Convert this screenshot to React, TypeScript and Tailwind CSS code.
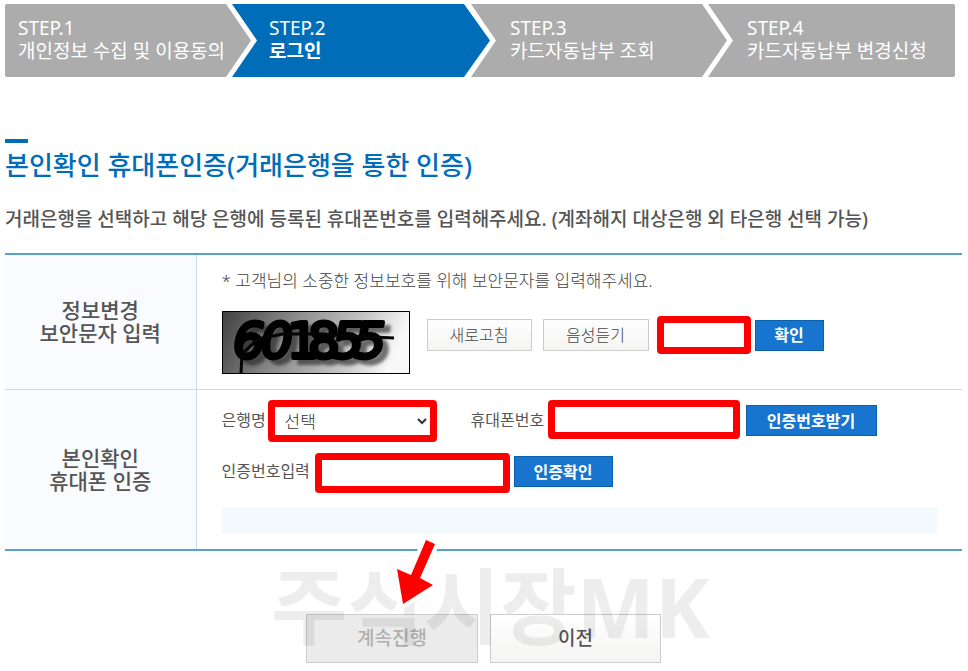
import React, { useState } from "react";

const STEPS = [
  {
    name: "STEP.1",
    title: "개인정보 수집 및 이용동의",
    className:
      "flex-[233] pl-[13px] [clip-path:polygon(0_0,calc(100%-25px)_0,100%_50%,calc(100%-25px)_100%,0_100%)]",
  },
  {
    name: "STEP.2",
    title: "로그인",
    className:
      "flex-[221] -ml-[19px] pl-[37px] [clip-path:polygon(0_0,calc(100%-26px)_0,100%_50%,calc(100%-26px)_100%,0_100%,25px_50%)]",
  },
  {
    name: "STEP.3",
    title: "카드자동납부 조회",
    className:
      "flex-[217] -ml-[19px] pl-[39px] [clip-path:polygon(0_0,calc(100%-25px)_0,100%_50%,calc(100%-25px)_100%,0_100%,25px_50%)]",
  },
  {
    name: "STEP.4",
    title: "카드자동납부 변경신청",
    className:
      "flex-[208] -ml-[19px] pl-[39px] [clip-path:polygon(0_0,100%_0,100%_100%,0_100%,25px_50%)]",
  },
];

const CURRENT_STEP = 1;

const lightButton =
  "h-8 border border-[#cccccc] bg-linear-to-b from-white to-[#f4f4f3] text-base font-light text-[#444444]";
const blueButton =
  "h-[31px] border border-[#0a62ab] bg-[#1774cf] text-base font-bold text-white";
const redField =
  "rounded-[4px] border-[7px] border-[#ff0000] bg-white text-[17px] font-light text-[#333333] outline-none";
const fieldLabel = "whitespace-nowrap";
const rowHeader =
  "w-[191px] border-r border-[#c3dcef] bg-[#f9fbfe] text-center align-middle text-[21px] leading-[23px] font-medium";

function StepBar() {
  return (
    <ol className="mr-[7px] flex overflow-hidden rounded-[2px]">
      {STEPS.map((step, index) => (
        <li
          key={step.name}
          aria-current={index === CURRENT_STEP ? "step" : undefined}
          className={`h-[73px] min-w-0 pt-[13px] text-[19px] leading-[23px] whitespace-nowrap text-white ${
            index === CURRENT_STEP ? "bg-[#006db9]" : "bg-[#acacac]"
          } ${step.className}`}
        >
          <p>{step.name}</p>
          <p className={index === CURRENT_STEP ? "font-bold" : ""}>
            {step.title}
          </p>
        </li>
      ))}
    </ol>
  );
}

function Captcha() {
  return (
    <svg
      width="188"
      height="63"
      viewBox="0 0 188 63"
      role="img"
      aria-label="보안문자"
      className="shrink-0"
    >
      <defs>
        <linearGradient id="captcha-bg" x1="0" y1="0" x2="1" y2="0.15">
          <stop offset="0" stopColor="#414141" />
          <stop offset="0.4" stopColor="#8c8c8c" />
          <stop offset="0.75" stopColor="#c4c4c4" />
          <stop offset="1" stopColor="#f8f8f8" />
        </linearGradient>
        <filter id="captcha-shadow">
          <feDropShadow
            dx="6"
            dy="5"
            stdDeviation="1.5"
            floodColor="#222222"
            floodOpacity="0.6"
          />
        </filter>
      </defs>
      <rect
        x="0.5"
        y="0.5"
        width="187"
        height="62"
        fill="url(#captcha-bg)"
        stroke="#000000"
      />
      <text
        y="47"
        fontFamily="'DejaVu Sans', sans-serif"
        fontSize="50"
        fill="#050505"
        stroke="#050505"
        strokeWidth="4"
        strokeLinejoin="round"
        filter="url(#captcha-shadow)"
      >
        <tspan x="11 39" fontStyle="italic">
          60
        </tspan>
        <tspan x="65 86">18</tspan>
        <tspan x="110 132" fontStyle="italic">
          55
        </tspan>
      </text>
      <path
        d="M19 62 L20 43 L36 28 L61 23 L101 23 L130 25 L172 27"
        fill="none"
        stroke="#050505"
        strokeWidth="3"
      />
    </svg>
  );
}

function PointerArrow() {
  return (
    <svg
      width="48"
      height="75"
      viewBox="0 0 48 75"
      aria-hidden="true"
      className="pointer-events-none absolute -top-[79px] left-[86px] z-20"
    >
      <path
        d="M34 5 L43 9 L28 43 L41 50 L11 69 L5 34 L19 40 Z"
        fill="#ff0000"
        stroke="#ffffff"
        strokeWidth="8"
        strokeLinejoin="round"
        paintOrder="stroke"
      />
    </svg>
  );
}

export default function App() {
  const [captcha, setCaptcha] = useState("");
  const [bank, setBank] = useState("");
  const [phone, setPhone] = useState("");
  const [code, setCode] = useState("");

  return (
    <main className="overflow-hidden bg-white pt-1 pr-[6px] pb-2 pl-[5px] font-['Noto_Sans','Noto_Sans_CJK_KR',sans-serif] text-[#555555]">
      <StepBar />

      <div className="mt-[62px] h-1 w-[23px] bg-[#006db9]" />
      <h1 className="mt-[6px] text-[26px] leading-8 font-medium text-[#006db9]">
        본인확인 휴대폰인증(거래은행을 통한 인증)
      </h1>
      <p className="mt-[26px] text-[19px] leading-6 font-medium">
        거래은행을 선택하고 해당 은행에 등록된 휴대폰번호를 입력해주세요.
        (계좌해지 대상은행 외 타은행 선택 가능)
      </p>

      <form onSubmit={(e) => e.preventDefault()}>
        <table className="mt-[22px] w-full border-t-2 border-b-2 border-[#5a9fd0]">
          <tbody>
            <tr className="border-b border-[#c3dcef]">
              <th scope="row" className={rowHeader}>
                정보변경
                <br />
                보안문자 입력
              </th>
              <td className="px-[25px] pt-4 pb-[15px]">
                <p className="text-[17px] leading-5 font-light text-[#444444]">
                  * 고객님의 소중한 정보보호를 위해 보안문자를 입력해주세요.
                </p>
                <div className="mt-5 flex">
                  <Captcha />
                  <div className="ml-[17px] flex h-12 items-center">
                    <button type="button" className={`w-[105px] ${lightButton}`}>
                      새로고침
                    </button>
                    <button
                      type="button"
                      className={`ml-[11px] w-[106px] ${lightButton}`}
                    >
                      음성듣기
                    </button>
                    <input
                      type="text"
                      aria-label="보안문자 입력"
                      value={captcha}
                      onChange={(e) => setCaptcha(e.target.value)}
                      className={`ml-2 h-[38px] w-[94px] ${redField}`}
                    />
                    <button
                      type="button"
                      className={`ml-1 w-[69px] ${blueButton}`}
                    >
                      확인
                    </button>
                  </div>
                </div>
              </td>
            </tr>

            <tr>
              <th scope="row" className={rowHeader}>
                본인확인
                <br />
                휴대폰 인증
              </th>
              <td className="px-[25px] pt-[10px] pb-[15px] text-base">
                <div className="flex items-start">
                  <label
                    htmlFor="bank"
                    className={`w-[43px] leading-10 ${fieldLabel}`}
                  >
                    은행명
                  </label>
                  <select
                    id="bank"
                    value={bank}
                    onChange={(e) => setBank(e.target.value)}
                    className={`ml-[3px] h-[42px] w-[169px] pl-[6px] ${redField}`}
                  >
                    <option value="">선택</option>
                  </select>
                  <label
                    htmlFor="phone"
                    className={`ml-[34px] w-[74px] leading-10 ${fieldLabel}`}
                  >
                    휴대폰번호
                  </label>
                  <input
                    id="phone"
                    type="tel"
                    value={phone}
                    onChange={(e) => setPhone(e.target.value)}
                    className={`ml-[3px] h-[39px] w-[192px] ${redField}`}
                  />
                  <button
                    type="button"
                    className={`mt-[5px] ml-[6px] w-[131px] ${blueButton}`}
                  >
                    인증번호받기
                  </button>
                </div>
                <div className="mt-[11px] flex items-start">
                  <label
                    htmlFor="code"
                    className={`w-[90px] leading-9 ${fieldLabel}`}
                  >
                    인증번호입력
                  </label>
                  <input
                    id="code"
                    type="text"
                    value={code}
                    onChange={(e) => setCode(e.target.value)}
                    className={`ml-[3px] h-10 w-[195px] ${redField}`}
                  />
                  <button
                    type="button"
                    className={`mt-[3px] ml-1 w-[99px] ${blueButton}`}
                  >
                    인증확인
                  </button>
                </div>
                <div className="mt-[14px] h-[27px] bg-[#f2fafd]" />
              </td>
            </tr>
          </tbody>
        </table>

        <div className="relative mt-[63px] flex justify-center gap-3">
          <span
            aria-hidden="true"
            className="pointer-events-none absolute -top-[56px] left-1/2 z-10 ml-[7px] -translate-x-1/2 text-[83px] leading-[96px] font-bold whitespace-nowrap text-black/7"
          >
            주식시장MK
          </span>
          <div className="relative">
            <PointerArrow />
            <button
              type="submit"
              disabled
              className="h-[49px] w-[172px] border border-[#cccccc] bg-[#ebebeb] text-[19px] font-medium text-[#b0b0b0]"
            >
              계속진행
            </button>
          </div>
          <button
            type="button"
            className="h-[49px] w-[171px] border border-[#cccccc] bg-linear-to-b from-white to-[#f4f4f3] text-[19px] font-medium"
          >
            이전
          </button>
        </div>
      </form>
    </main>
  );
}
